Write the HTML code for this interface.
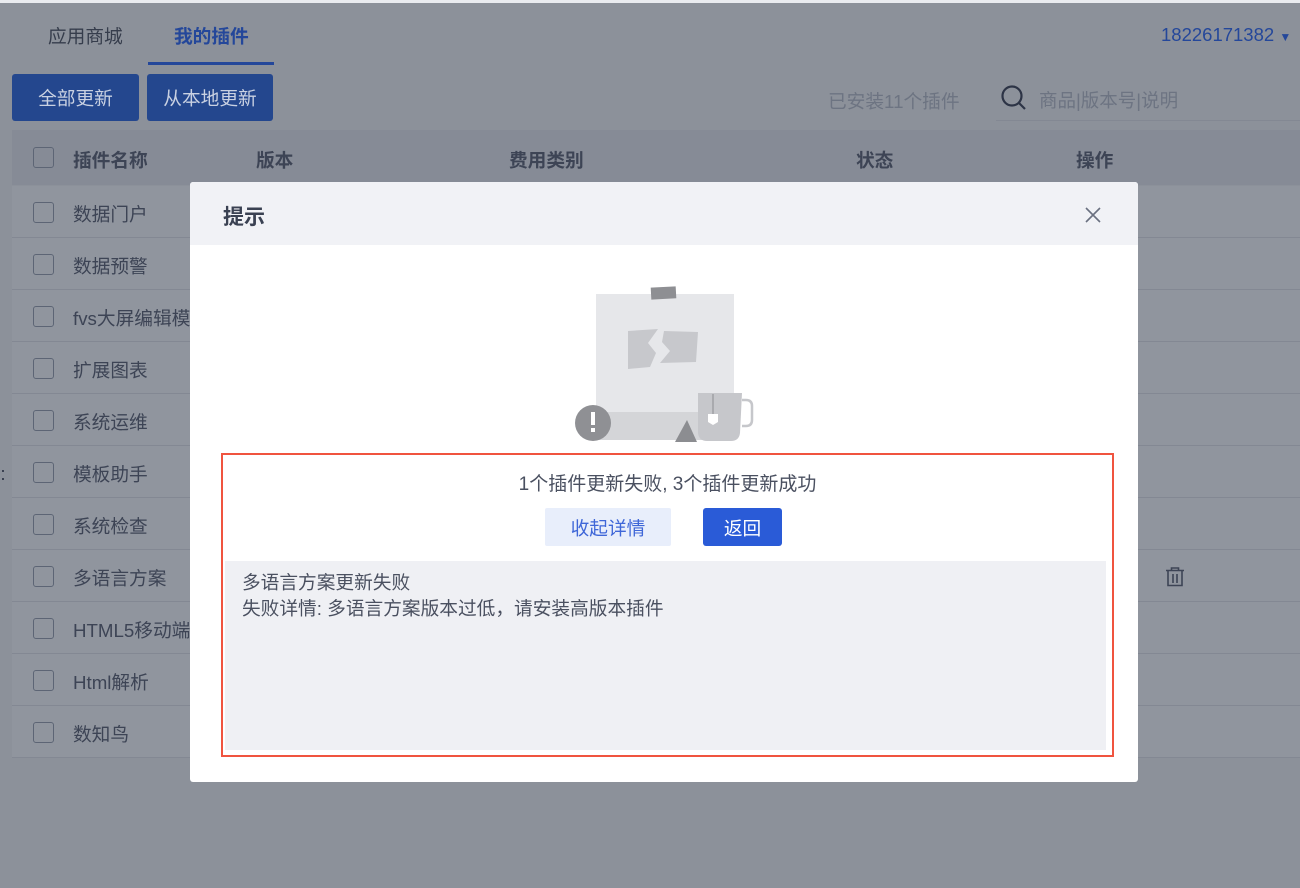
<!DOCTYPE html>
<html><head><meta charset="utf-8">
<style>
*{margin:0;padding:0;box-sizing:border-box}
body{width:1300px;height:888px;overflow:hidden;background:#8c919a;font-family:"Liberation Sans","Noto Sans CJK SC",sans-serif;position:relative;color:#3a4152}
.abs{position:absolute}
.topstrip{left:0;top:0;width:1300px;height:3px;background:#e9ebef}
.tab{top:22px;font-size:18.7px;}
.btn{top:74px;height:47px;background:#24478e;color:#c9d1e2;font-size:18.7px;border-radius:3px;display:flex;align-items:center;justify-content:center}
.thead{left:12px;top:130px;width:1288px;height:55px;background:#868b96}
.row{left:12px;width:1288px;height:52px;background:#90959e;border-bottom:1px solid #838893}
.cb{position:absolute;left:21px;width:21px;height:21px;border:1.5px solid #5d6575;border-radius:3px}
.rt{position:absolute;left:61px;font-size:18.7px;color:#3d4455}
.th{position:absolute;top:146px;font-size:18.7px;font-weight:bold;color:#3d4455}
</style></head><body>
<div class="abs topstrip"></div>
<div class="abs tab" style="left:48px;color:#363d4c">应用商城</div>
<div class="abs tab" style="left:174px;color:#24479a;font-weight:bold">我的插件</div>
<div class="abs" style="left:148px;top:62px;width:126px;height:3px;background:#24479a"></div>
<div class="abs" style="left:1161px;top:24px;font-size:18.5px;color:#24479a">18226171382 <span style="font-size:12px">▼</span></div>
<div class="abs btn" style="left:12px;width:127px">全部更新</div>
<div class="abs btn" style="left:147px;width:126px">从本地更新</div>
<div class="abs" style="left:828px;top:87px;font-size:18.7px;color:#6d7482">已安装11个插件</div>
<svg class="abs" style="left:1000px;top:84px" width="28" height="28" viewBox="0 0 28 28"><circle cx="12" cy="12" r="9.5" fill="none" stroke="#2d3446" stroke-width="2.2"/><line x1="19" y1="19" x2="25" y2="25" stroke="#2d3446" stroke-width="2.2"/></svg>
<div class="abs" style="left:1039px;top:87px;font-size:18.5px;color:#6d7482">商品|版本号|说明</div>
<div class="abs" style="left:996px;top:120px;width:304px;height:1px;background:#838893"></div>
<div class="abs thead"><div class="cb" style="top:17px"></div></div>
<div class="th" style="left:73px">插件名称</div>
<div class="th" style="left:256px">版本</div>
<div class="th" style="left:509px">费用类别</div>
<div class="th" style="left:856px">状态</div>
<div class="th" style="left:1076px">操作</div>
<div class="abs row" style="top:186px"><div class="cb" style="top:16px"></div><div class="rt" style="top:14px">数据门户</div></div>
<div class="abs row" style="top:238px"><div class="cb" style="top:16px"></div><div class="rt" style="top:14px">数据预警</div></div>
<div class="abs row" style="top:290px"><div class="cb" style="top:16px"></div><div class="rt" style="top:14px">fvs大屏编辑模</div></div>
<div class="abs row" style="top:342px"><div class="cb" style="top:16px"></div><div class="rt" style="top:14px">扩展图表</div></div>
<div class="abs row" style="top:394px"><div class="cb" style="top:16px"></div><div class="rt" style="top:14px">系统运维</div></div>
<div class="abs row" style="top:446px"><div class="cb" style="top:16px"></div><div class="rt" style="top:14px">模板助手</div></div>
<div class="abs row" style="top:498px"><div class="cb" style="top:16px"></div><div class="rt" style="top:14px">系统检查</div></div>
<div class="abs row" style="top:550px"><div class="cb" style="top:16px"></div><div class="rt" style="top:14px">多语言方案</div></div>
<div class="abs row" style="top:602px"><div class="cb" style="top:16px"></div><div class="rt" style="top:14px">HTML5移动端</div></div>
<div class="abs row" style="top:654px"><div class="cb" style="top:16px"></div><div class="rt" style="top:14px">Html解析</div></div>
<div class="abs row" style="top:706px"><div class="cb" style="top:16px"></div><div class="rt" style="top:14px">数知鸟</div></div>
<div class="abs" style="left:0;top:466px;font-size:18px;color:#2d3446;line-height:8px">·<br>·</div>
<svg class="abs" style="left:1164px;top:567px" width="22" height="20" viewBox="0 0 22 20"><path d="M2 3.5h18M7.5 3.5V1h7v2.5M4 3.5v15h14v-15M9 7v9M13 7v9" fill="none" stroke="#3d4455" stroke-width="1.6"/></svg>

<div class="abs" style="left:190px;top:182px;width:948px;height:600px;background:#fff;border-radius:3px;overflow:hidden">
  <div style="height:63px;background:#f1f2f6;position:relative">
    <div style="position:absolute;left:33px;top:19px;font-size:21px;font-weight:bold;color:#3a4152">提示</div>
    <svg style="position:absolute;left:894px;top:24px" width="18" height="18" viewBox="0 0 18 18"><path d="M2 2L16 16M16 2L2 16" stroke="#6a7080" stroke-width="1.6"/></svg>
  </div>
  <svg style="position:absolute;left:380px;top:100px" width="200" height="165" viewBox="0 0 200 165">
    <rect x="26" y="12" width="138" height="120" fill="#e6e7ea"/>
    <rect x="81" y="5" width="25" height="12" fill="#8e8f93" transform="rotate(-3 93 11)"/>
    <path d="M58 49l30-2-10 14 8 10-6 14-22 2z" fill="#c7c8cc"/>
    <path d="M94 49l34 1-2 30-36 1 10-12-8-9z" fill="#c7c8cc"/>
    <rect x="18" y="130" width="140" height="28" fill="#d4d5d8"/>
    <circle cx="23" cy="141" r="18" fill="#8f9094"/>
    <rect x="21" y="130" width="4" height="13" fill="#fff"/><rect x="21" y="146" width="4" height="4" fill="#fff"/>
    <path d="M105 160l12-22 10 22z" fill="#8c8d91"/>
    <path d="M128 111h44l-2 40q-1 8-9 8h-24q-8 0-9-8z" fill="#c6c7cb"/>
    <path d="M172 118h4q6 0 6 6v14q0 6-6 6h-4" fill="none" stroke="#c6c7cb" stroke-width="2.5"/>
    <path d="M143 112v20" stroke="#8c8d91" stroke-width="1"/>
    <path d="M138 132h10v8l-5 3-5-3z" fill="#fff"/>
  </svg>
  <div style="position:absolute;left:31px;top:271px;width:893px;height:304px;border:2.5px solid #f0543f">
    <div style="position:absolute;left:0;right:0;top:14px;text-align:center;font-size:19px;color:#4a5060">1个插件更新失败, 3个插件更新成功</div>
    <div style="position:absolute;left:322px;top:53px;width:126px;height:38px;background:#e8eefb;color:#3f67d8;font-size:18.7px;display:flex;align-items:center;justify-content:center;border-radius:2px">收起详情</div>
    <div style="position:absolute;left:480px;top:53px;width:79px;height:38px;background:#2a5bd7;color:#fff;font-size:18.7px;display:flex;align-items:center;justify-content:center;border-radius:3px">返回</div>
    <div style="position:absolute;left:2px;top:106px;width:881px;height:189px;background:#eff0f4;padding:9px 17px;font-size:18.7px;line-height:26px;color:#4a5060">多语言方案更新失败<br>失败详情: 多语言方案版本过低，请安装高版本插件</div>
  </div>
</div>
</body></html>
